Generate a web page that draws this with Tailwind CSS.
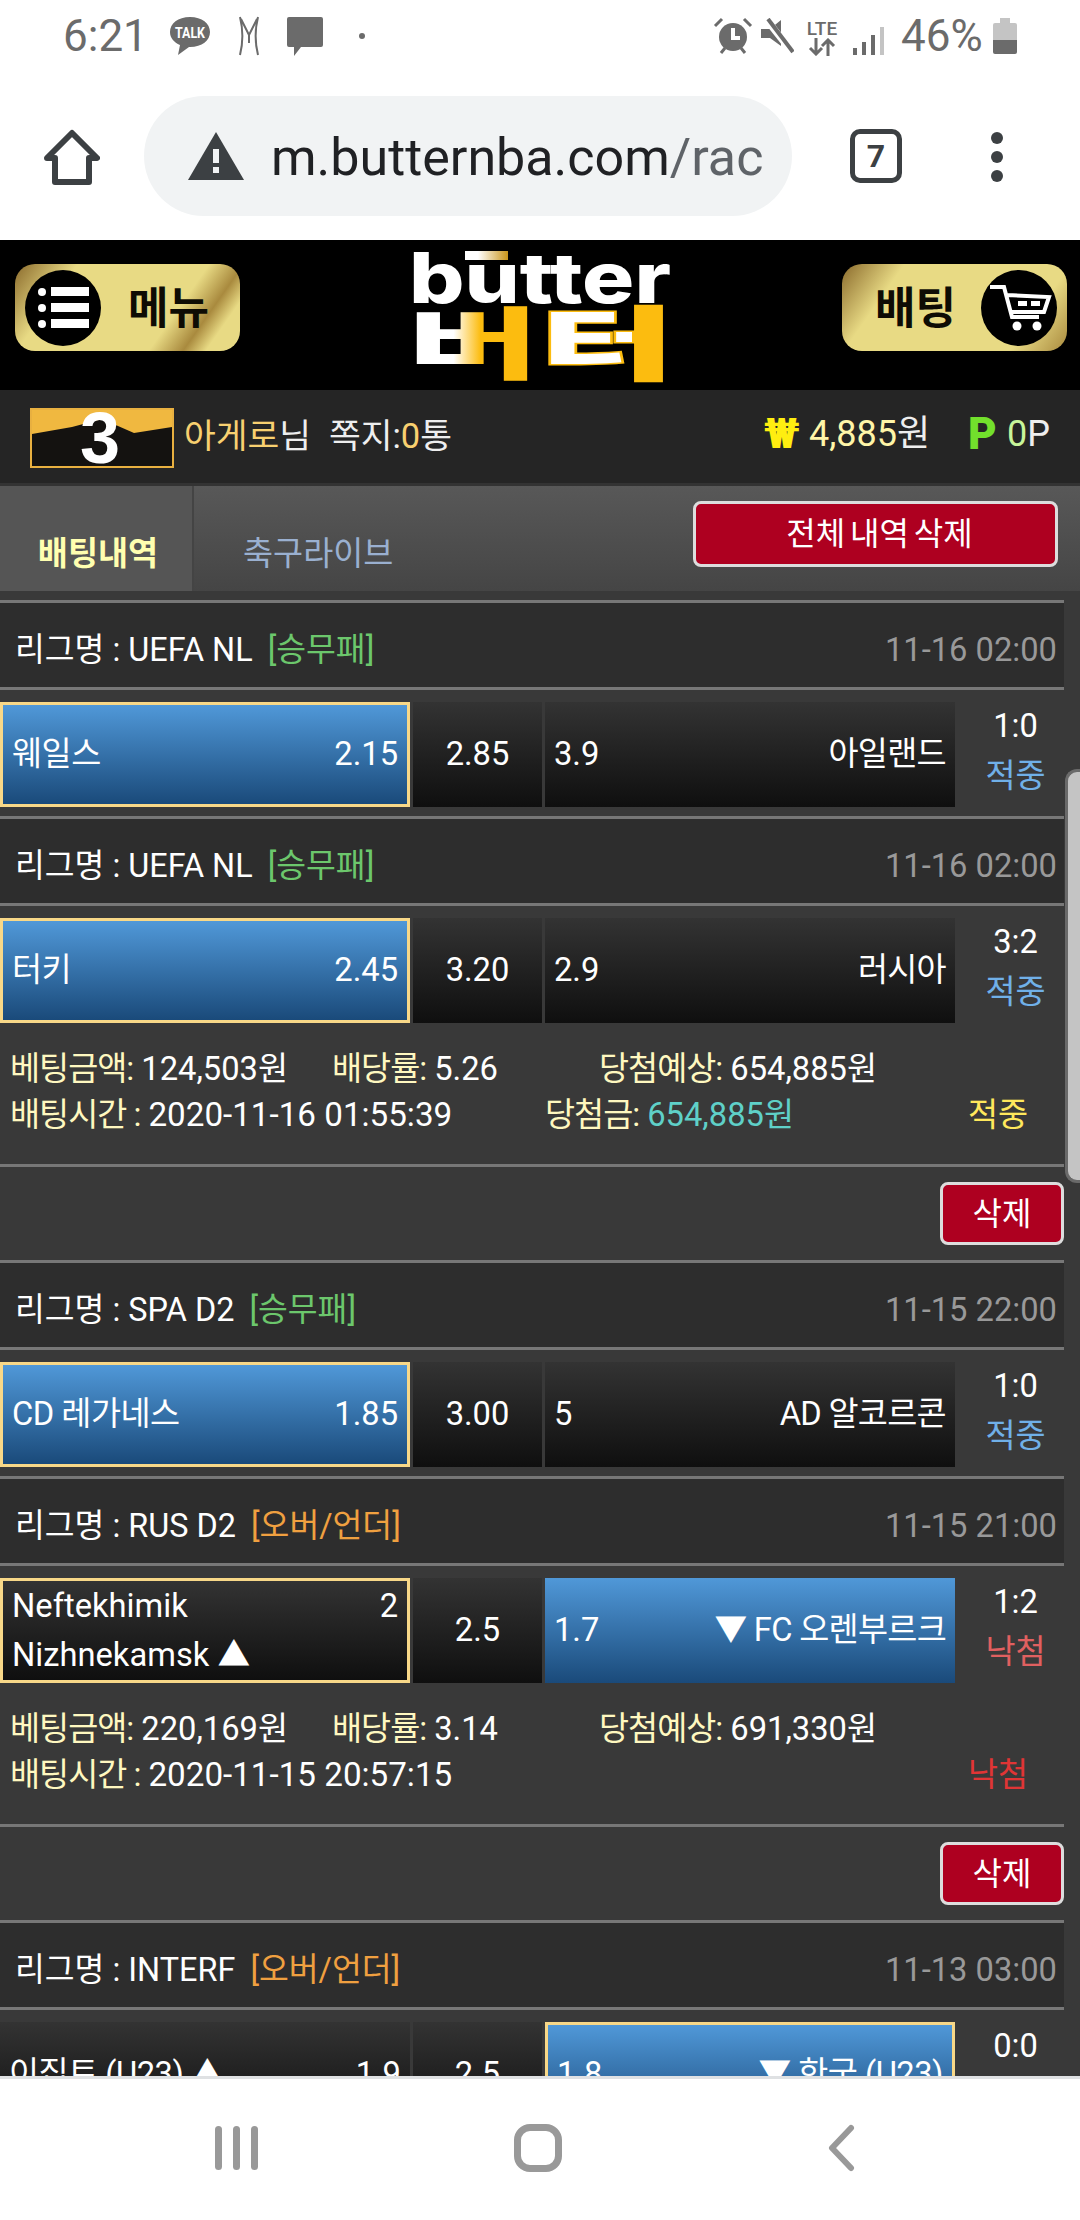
<!DOCTYPE html>
<html lang="ko">
<head>
<meta charset="utf-8">
<script src="https://cdn.jsdelivr.net/npm/@tailwindcss/browser@4"></script>
</head>
<body class="m-0">
<div class="relative w-[1080px] h-[2220px] overflow-hidden flex flex-col bg-white font-['Roboto','Noto_Sans_CJK_KR',sans-serif] text-[32.7px] leading-none text-white">

  <!-- Status bar -->
  <div class="h-[72px] shrink-0 flex items-center text-[#6b6b6b] relative">
    <span class="ml-[63px] text-[44px] w-[85px]">6:21</span>
    <svg class="ml-[20px]" width="44" height="40" viewBox="0 0 44 40"><path d="M22 1C10 1 2 7.500 2 16c0 6 4 10.500 10 13l-2 10 11-8h1c12 0 20-6.500 20-15S34 1 22 1z" fill="#6b6b6b"/><text x="22" y="22" text-anchor="middle" font-size="14" font-weight="700" fill="#fff" textLength="30" lengthAdjust="spacingAndGlyphs">TALK</text></svg>
    <svg class="ml-[26px]" width="22" height="40" viewBox="0 0 22 40" fill="none" stroke="#6b6b6b" stroke-width="2"><path d="M2 1c3 12 3 26 0 38M20 1c-3 12-3 26 0 38M3 3l8 16 8-16M11 19v8"/></svg>
    <svg class="ml-[26px]" width="38" height="40" viewBox="0 0 38 40"><path d="M3 1h32a2 2 0 0 1 2 2v26a2 2 0 0 1-2 2H15l-7 9v-9H3a2 2 0 0 1-2-2V3a2 2 0 0 1 2-2z" fill="#6b6b6b"/></svg>
    <span class="ml-[35px] w-[6px] h-[6px] rounded-full bg-[#6b6b6b]"></span>
    <svg class="absolute left-[713px] top-[17px]" width="40" height="38" viewBox="0 0 40 38"><circle cx="20" cy="20" r="14" fill="#6b6b6b"/><path d="M20 11v10h7" stroke="#fff" stroke-width="4" fill="none"/><path d="M2 9l7-7M38 9l-7-7M8 36l4-5M32 36l-4-5" stroke="#6b6b6b" stroke-width="3"/></svg>
    <svg class="absolute left-[760px] top-[18px]" width="34" height="36" viewBox="0 0 34 36"><path d="M1 11h9L21 2v26L10 20H1z" fill="#6b6b6b"/><path d="M6 1l26 33" stroke="#fff" stroke-width="7"/><path d="M8 1l25 33" stroke="#6b6b6b" stroke-width="4"/></svg>
    <div class="absolute left-[803px] top-[19px] w-[38px] flex flex-col items-center text-[#6b6b6b]">
      <span class="text-[19px] font-medium leading-[19px]">LTE</span>
      <svg width="30" height="18" viewBox="0 0 30 18" fill="none" stroke="#6b6b6b" stroke-width="3"><path d="M9 0v15M3 10l6 6 6-6M21 18V3M15 8l6-6 6 6"/></svg>
    </div>
    <svg class="absolute left-[853px] top-[27px]" width="32" height="28" viewBox="0 0 32 28"><rect x="0" y="21" width="4" height="7" fill="#6b6b6b"/><rect x="9" y="15" width="4" height="13" fill="#6b6b6b"/><rect x="18" y="8" width="4" height="20" fill="#6b6b6b"/><rect x="27" y="0" width="4" height="28" fill="#c4c4c4"/></svg>
    <span class="absolute left-[901px] top-[14px] text-[44px]">46%</span>
    <div class="absolute left-[993px] top-[18px] w-[24px] h-[36px] flex flex-col items-center">
      <div class="w-[10px] h-[5px] bg-[#c4c4c4]"></div>
      <div class="w-[24px] flex-1 bg-[#c4c4c4] rounded-t-[2px]"></div>
      <div class="w-[24px] h-[14px] bg-[#6b6b6b] rounded-b-[2px]"></div>
    </div>
  </div>

  <!-- Browser bar -->
  <div class="h-[168px] shrink-0 flex items-start relative">
    <svg class="absolute left-[44px] top-[57px]" width="56" height="56" viewBox="0 0 56 56" fill="none" stroke="#3c4043" stroke-width="6" stroke-linejoin="round"><path d="M3 29L28 4l25 25h-8v24H11V29z"/></svg>
    <div class="absolute left-[144px] top-[24px] w-[648px] h-[120px] rounded-[60px] bg-[#f1f3f4] flex items-center">
      <svg class="ml-[44px]" width="56" height="48" viewBox="0 0 56 48"><path d="M28 0l28 48H0z" fill="#3c4043"/><rect x="25" y="17" width="6" height="14" fill="#f1f3f4"/><rect x="25" y="35" width="6" height="6" fill="#f1f3f4"/></svg>
      <div class="ml-[27px] mt-[3px] w-[491px] overflow-hidden whitespace-nowrap text-[52px] text-[#202124] leading-[60px]">m.butternba.com<span class="text-[#5f6368]">/rac</span></div>
    </div>
    <div class="absolute left-[850px] top-[57px] w-[52px] h-[54px] border-[5px] border-[#3c4043] rounded-[10px] flex items-center justify-center text-[32px] font-bold text-[#3c4043]">7</div>
    <div class="absolute left-[991px] top-[60px] flex flex-col gap-[7px]">
      <span class="w-[12px] h-[12px] rounded-full bg-[#3c4043]"></span>
      <span class="w-[12px] h-[12px] rounded-full bg-[#3c4043]"></span>
      <span class="w-[12px] h-[12px] rounded-full bg-[#3c4043]"></span>
    </div>
  </div>

  <!-- Site header -->
  <div class="h-[150px] shrink-0 bg-black flex items-start justify-between relative">
    <div class="ml-[15px] mt-[24px] w-[225px] h-[87px] rounded-[20px] bg-[linear-gradient(125deg,#8a6a2c_0%,#e8da84_22%,#e8da84_68%,#a98a3e_80%,#e8da84_88%)] flex items-center">
      <div class="ml-[10px] w-[76px] h-[76px] rounded-full bg-black flex flex-col items-center justify-center gap-[7px]">
        <div class="flex items-center gap-[5px]"><span class="w-[8px] h-[8px] rounded-full bg-white"></span><span class="w-[38px] h-[9px] bg-white"></span></div>
        <div class="flex items-center gap-[5px]"><span class="w-[8px] h-[8px] rounded-full bg-white"></span><span class="w-[38px] h-[9px] bg-white"></span></div>
        <div class="flex items-center gap-[5px]"><span class="w-[8px] h-[8px] rounded-full bg-white"></span><span class="w-[38px] h-[9px] bg-white"></span></div>
      </div>
      <span class="ml-[27px] mt-[3px] text-[44px] font-bold text-[#0e0c04]">메뉴</span>
    </div>
    <svg class="absolute left-[405px] top-[0px]" width="270" height="150" viewBox="0 0 270 150">
      <defs>
        <linearGradient id="lg" gradientUnits="userSpaceOnUse" x1="0" x2="270" y1="0" y2="0"><stop offset="0.18" stop-color="#fff"/><stop offset="0.28" stop-color="#fcbc0f"/><stop offset="0.51" stop-color="#fcbc0f"/><stop offset="0.51" stop-color="#fff"/><stop offset="0.84" stop-color="#fff"/><stop offset="0.84" stop-color="#fcbc0f"/></linearGradient>
        <linearGradient id="lb" x1="0" x2="1" y1="0" y2="0"><stop offset="0.3" stop-color="#fff"/><stop offset="1" stop-color="#c9951a"/></linearGradient>
      </defs>
      <rect x="60" y="11" width="43" height="9" fill="url(#lb)"/>
      <text x="4" y="63" font-family="Inter" font-size="70" font-weight="800" fill="#fff" textLength="262" lengthAdjust="spacingAndGlyphs">butter</text>
      <text x="2" y="133" font-family="Noto Sans CJK KR" font-size="78" font-weight="900" fill="url(#lg)" textLength="266" lengthAdjust="spacingAndGlyphs">버<tspan stroke="#fcbc0f" stroke-width="3" paint-order="stroke">터</tspan></text>
    </svg>
    <div class="mr-[13px] mt-[24px] w-[225px] h-[87px] rounded-[20px] bg-[linear-gradient(125deg,#8a6a2c_0%,#e8da84_22%,#e8da84_80%,#a98a3e_100%)] flex items-center justify-end">
      <span class="mr-[25px] mt-[2px] text-[44px] font-bold text-[#0e0c04]">배팅</span>
      <div class="mr-[10px] w-[76px] h-[76px] rounded-full bg-black flex items-center justify-center">
        <svg width="66" height="52" viewBox="0 0 66 52" fill="none" stroke="#fff" stroke-width="4"><path d="M4 5h14l8 30h27M21 13l42 2-5 15H26"/><rect x="32" y="19" width="9" height="5" fill="#fff" stroke="none"/><rect x="45" y="19" width="9" height="5" fill="#fff" stroke="none"/><circle cx="31" cy="44" r="4.500" fill="#fff" stroke="none"/><circle cx="51" cy="44" r="4.500" fill="#fff" stroke="none"/></svg>
      </div>
    </div>
  </div>

  <!-- User info bar -->
  <div class="h-[96px] shrink-0 bg-[#252525] border-b-[3px] border-[#333] flex items-start relative">
    <div class="ml-[30px] mt-[18px] w-[144px] h-[60px] relative overflow-hidden border-[2px] border-[#e8b040] bg-[#141210] flex items-center justify-center">
      <svg class="absolute left-0 top-0" width="140" height="30" viewBox="0 0 140 30"><path d="M0 0h140v17l-38 6-32-14-30 8-40 7z" fill="#f0b840"/></svg>
      <span class="relative -ml-[4px] text-[72px] font-['Liberation_Sans',sans-serif] font-bold text-white">3</span>
    </div>
    <div class="ml-[10px] mt-[26px] leading-[40px] text-[34.500px] whitespace-nowrap"><span class="text-[#f8d070]">아게로</span><span class="text-[#eee]">님</span><span class="ml-[18px] text-[#eee]">쪽지:</span><span class="text-[#f8d070]">0</span><span class="text-[#eee]">통</span></div>
    <div class="absolute left-[764px] top-[24px] flex items-center h-[40px] text-[36px] whitespace-nowrap">
      <span class="font-black text-[#ffee10] text-[42px] w-[45px]">₩</span>
      <span class="text-[#fff5a8]">4,885</span><span class="text-[#eee]">원</span>
    </div>
    <div class="absolute left-[968px] top-[24px] flex items-center h-[40px] text-[36px] whitespace-nowrap">
      <span class="font-black text-[#72e02c] text-[44px] w-[39px]">P</span>
      <span class="text-[#c8f59a]">0</span><span class="text-[#eee]">P</span>
    </div>
  </div>

  <!-- Tabs -->
  <div class="h-[105px] shrink-0 bg-[linear-gradient(#585858,#454545)] flex items-start relative">
    <div class="w-[194px] h-[105px] bg-[#555] border-r-[2px] border-[#444] flex items-center justify-center pt-[31px] pl-[4px] font-bold text-[#ffffb0]">배팅내역</div>
    <div class="ml-[49px] h-[105px] flex items-center pt-[31px] text-[#9ab0d0]">축구라이브</div>
    <button class="absolute left-[693px] top-[15px] w-[365px] h-[66px] pl-[8px] bg-[#ae0020] border-[3px] border-[#ddd] rounded-[8px] text-white text-[32px] [word-spacing:-3px]">전체 내역 삭제</button>
  </div>

  <!-- Bet list -->
  <div class="flex-1 min-h-0 overflow-hidden bg-[#393939] border-b-[3px] border-[#dfe1e3]">
    <div class="h-[9px]"></div>
    <div class="w-[1064px] flex flex-col">

      <!-- 1 -->
      <div class="border-t-[3px] border-[#777] h-[87px] pt-[10px] bg-[#2d2d2d] flex items-center justify-between pl-[15px] pr-[7px]"><span class="text-[32.400px]">리그명 : UEFA NL<span class="ml-[15px] text-[#6cc76c]">[승무패]</span></span><span class="text-[#999]">11-16 02:00</span></div>
      <div class="border-t-[3px] border-[#777] h-[129px] pt-[12px] flex items-start">
        <div class="w-[410px] h-[105px] border-[3px] border-[#f8d888] bg-[linear-gradient(#5098d8,#1a4a7a)] flex items-center justify-between px-[9px]"><span class="tracking-[-0.5px]">웨일스</span><span>2.15</span></div>
        <div class="ml-[3px] w-[129px] h-[105px] bg-[linear-gradient(#333,#0f0f0f)] flex items-center justify-center">2.85</div>
        <div class="ml-[3px] w-[410px] h-[105px] bg-[linear-gradient(#333,#0f0f0f)] flex items-center justify-between px-[9px]"><span>3.9</span><span class="tracking-[-0.7px]">아일랜드</span></div>
        <div class="w-[109px] pl-[12px] flex flex-col items-center gap-[17px] pt-[8px]"><span>1:0</span><span class="text-[#70b0e8]">적중</span></div>
      </div>

      <!-- 2 -->
      <div class="border-t-[3px] border-[#777] h-[87px] pt-[10px] bg-[#2d2d2d] flex items-center justify-between pl-[15px] pr-[7px]"><span class="text-[32.400px]">리그명 : UEFA NL<span class="ml-[15px] text-[#6cc76c]">[승무패]</span></span><span class="text-[#999]">11-16 02:00</span></div>
      <div class="border-t-[3px] border-[#777] h-[261px] pt-[12px]">
        <div class="flex items-start">
          <div class="w-[410px] h-[105px] border-[3px] border-[#f8d888] bg-[linear-gradient(#5098d8,#1a4a7a)] flex items-center justify-between px-[9px]"><span class="tracking-[-0.5px]">터키</span><span>2.45</span></div>
          <div class="ml-[3px] w-[129px] h-[105px] bg-[linear-gradient(#333,#0f0f0f)] flex items-center justify-center">3.20</div>
          <div class="ml-[3px] w-[410px] h-[105px] bg-[linear-gradient(#333,#0f0f0f)] flex items-center justify-between px-[9px]"><span>2.9</span><span class="tracking-[-0.7px]">러시아</span></div>
          <div class="w-[109px] pl-[12px] flex flex-col items-center gap-[17px] pt-[8px]"><span>3:2</span><span class="text-[#70b0e8]">적중</span></div>
        </div>
        <div class="mt-[23px] h-[46px] flex items-center whitespace-nowrap pl-[10px]">
          <span class="w-[322px]"><span class="text-[#fff8c0] tracking-[-1px]">베팅금액:</span> 124,503원</span>
          <span class="w-[267px]"><span class="text-[#fff8c0] tracking-[-1px]">배당률:</span> 5.26</span>
          <span><span class="text-[#fff8c0] tracking-[-1px]">당첨예상:</span> 654,885원</span>
        </div>
        <div class="h-[46px] flex items-center whitespace-nowrap pl-[10px]">
          <span class="w-[535px]"><span class="text-[#fff8c0] tracking-[-1px]">배팅시간 :</span> <span class="text-[33.200px]">2020-11-16 01:55:39</span></span>
          <span class="w-[423px]"><span class="text-[#fff8c0] tracking-[-1px]">당첨금:</span> <span class="text-[#5fd0c8]">654,885원</span></span>
          <span class="text-[#ffe85c]">적중</span>
        </div>
      </div>
      <div class="border-t-[3px] border-[#777] h-[96px] flex justify-end items-start pt-[15px]">
        <button class="w-[124px] h-[63px] bg-[#ae0020] border-[3px] border-[#ddd] rounded-[8px] text-white text-[32px]">삭제</button>
      </div>

      <!-- 3 -->
      <div class="border-t-[3px] border-[#777] h-[87px] pt-[10px] bg-[#2d2d2d] flex items-center justify-between pl-[15px] pr-[7px]"><span class="text-[32.400px]">리그명 : SPA D2<span class="ml-[15px] text-[#6cc76c]">[승무패]</span></span><span class="text-[#999]">11-15 22:00</span></div>
      <div class="border-t-[3px] border-[#777] h-[129px] pt-[12px] flex items-start">
        <div class="w-[410px] h-[105px] border-[3px] border-[#f8d888] bg-[linear-gradient(#5098d8,#1a4a7a)] flex items-center justify-between px-[9px]"><span class="tracking-[-0.5px]">CD 레가네스</span><span>1.85</span></div>
        <div class="ml-[3px] w-[129px] h-[105px] bg-[linear-gradient(#333,#0f0f0f)] flex items-center justify-center">3.00</div>
        <div class="ml-[3px] w-[410px] h-[105px] bg-[linear-gradient(#333,#0f0f0f)] flex items-center justify-between px-[9px]"><span>5</span><span class="tracking-[-0.7px]">AD 알코르콘</span></div>
        <div class="w-[109px] pl-[12px] flex flex-col items-center gap-[17px] pt-[8px]"><span>1:0</span><span class="text-[#70b0e8]">적중</span></div>
      </div>

      <!-- 4 -->
      <div class="border-t-[3px] border-[#777] h-[87px] pt-[10px] bg-[#2d2d2d] flex items-center justify-between pl-[15px] pr-[7px]"><span class="text-[32.400px]">리그명 : RUS D2<span class="ml-[15px] text-[#f0a040]">[오버/언더]</span></span><span class="text-[#999]">11-15 21:00</span></div>
      <div class="border-t-[3px] border-[#777] h-[261px] pt-[12px]">
        <div class="flex items-start">
          <div class="w-[410px] h-[105px] border-[3px] border-[#f8d888] bg-[linear-gradient(#333,#0f0f0f)] flex flex-col justify-center px-[9px] leading-[49px]"><div class="flex justify-between"><span>Neftekhimik</span><span>2</span></div><div>Nizhnekamsk ▲</div></div>
          <div class="ml-[3px] w-[129px] h-[105px] bg-[linear-gradient(#333,#0f0f0f)] flex items-center justify-center">2.5</div>
          <div class="ml-[3px] w-[410px] h-[105px] bg-[linear-gradient(#5098d8,#1a4a7a)] flex items-center justify-between px-[9px]"><span>1.7</span><span class="tracking-[-0.7px]">▼ FC 오렌부르크</span></div>
          <div class="w-[109px] pl-[12px] flex flex-col items-center gap-[17px] pt-[8px]"><span>1:2</span><span class="text-[#e06060]">낙첨</span></div>
        </div>
        <div class="mt-[23px] h-[46px] flex items-center whitespace-nowrap pl-[10px]">
          <span class="w-[322px]"><span class="text-[#fff8c0] tracking-[-1px]">베팅금액:</span> 220,169원</span>
          <span class="w-[267px]"><span class="text-[#fff8c0] tracking-[-1px]">배당률:</span> 3.14</span>
          <span><span class="text-[#fff8c0] tracking-[-1px]">당첨예상:</span> 691,330원</span>
        </div>
        <div class="h-[46px] flex items-center whitespace-nowrap pl-[10px]">
          <span class="w-[958px]"><span class="text-[#fff8c0] tracking-[-1px]">배팅시간 :</span> <span class="text-[33.200px]">2020-11-15 20:57:15</span></span>
          <span class="text-[#e03535]">낙첨</span>
        </div>
      </div>
      <div class="border-t-[3px] border-[#777] h-[96px] flex justify-end items-start pt-[15px]">
        <button class="w-[124px] h-[63px] bg-[#ae0020] border-[3px] border-[#ddd] rounded-[8px] text-white text-[32px]">삭제</button>
      </div>

      <!-- 5 -->
      <div class="border-t-[3px] border-[#777] h-[87px] pt-[10px] bg-[#2d2d2d] flex items-center justify-between pl-[15px] pr-[7px]"><span class="text-[32.400px]">리그명 : INTERF<span class="ml-[15px] text-[#f0a040]">[오버/언더]</span></span><span class="text-[#999]">11-13 03:00</span></div>
      <div class="border-t-[3px] border-[#777] h-[129px] pt-[12px] flex items-start">
        <div class="w-[410px] h-[105px] bg-[linear-gradient(#333,#0f0f0f)] flex items-center justify-between px-[9px]"><span class="tracking-[-0.5px]">이집트 (U23) ▲</span><span>1.9</span></div>
        <div class="ml-[3px] w-[129px] h-[105px] bg-[linear-gradient(#333,#0f0f0f)] flex items-center justify-center">2.5</div>
        <div class="ml-[3px] w-[410px] h-[105px] border-[3px] border-[#f8d888] bg-[linear-gradient(#5098d8,#1a4a7a)] flex items-center justify-between px-[9px]"><span>1.8</span><span class="tracking-[-0.5px]">▼ 한국 (U23)</span></div>
        <div class="w-[109px] pl-[12px] flex flex-col items-center gap-[17px] pt-[8px]"><span>0:0</span><span class="text-[#70b0e8]">적중</span></div>
      </div>
    </div>
  </div>

  <!-- Scroll thumb overlay -->
  <div class="absolute left-[1065px] top-[769px] w-[15px] h-[414px] rounded-l-[12px] bg-[#c4c4c4] border-l-[3px] border-y-[3px] border-[#6a6a6a]"></div>

  <!-- Android nav -->
  <div class="h-[141px] shrink-0 bg-white relative">
    <div class="absolute left-[215px] top-[47px] flex gap-[11px]">
      <span class="w-[7px] h-[44px] rounded-full bg-[#999]"></span>
      <span class="w-[7px] h-[44px] rounded-full bg-[#999]"></span>
      <span class="w-[7px] h-[44px] rounded-full bg-[#999]"></span>
    </div>
    <div class="absolute left-[514px] top-[45px] w-[48px] h-[48px] border-[7px] border-[#999] rounded-[16px]"></div>
    <svg class="absolute left-[826px] top-[45px]" width="30" height="48" viewBox="0 0 30 48" fill="none" stroke="#999" stroke-width="6" stroke-linecap="round" stroke-linejoin="round"><path d="M25 4L6 24l19 20"/></svg>
  </div>
</div>
</body>
</html>
